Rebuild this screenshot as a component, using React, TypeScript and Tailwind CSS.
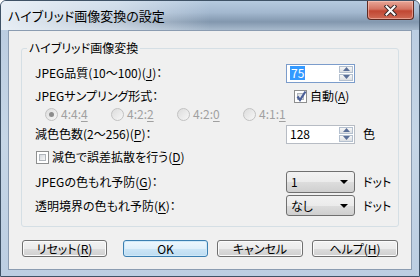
import type { ReactNode } from 'react';

const font = "font-['Noto_Sans_CJK_JP','Noto_Sans',sans-serif] [font-feature-settings:'palt']";

function Key({ children }: { children: ReactNode }) {
  return <span className="underline underline-offset-2">{children}</span>;
}

function CheckBox({ checked }: { checked?: boolean }) {
  return (
    <div className="relative w-[13px] h-[13px] shrink-0 border border-[#8e8f8f] bg-white p-[2px]">
      <div className="w-full h-full border border-[#b0b5bb] bg-[linear-gradient(135deg,#d7dbe0,#f7f7f7)]" />
      {checked && (
        <svg className="absolute left-[1px] top-[-1px]" width="11" height="12" viewBox="0 0 11 12">
          <path d="M1.5 6.5 L4 10 L9.5 1.5" fill="none" stroke="#4b5f98" strokeWidth="2.2" />
        </svg>
      )}
    </div>
  );
}

function Radio({ label, last, selected }: { label: string; last: string; selected?: boolean }) {
  return (
    <div className="flex items-center w-[66px] shrink-0">
      <div className="w-[13px] h-[13px] rounded-full border border-[#c2c2c2] bg-[linear-gradient(135deg,#dcdcdc,#f7f7f7)] flex items-center justify-center">
        {selected && <div className="w-[5px] h-[5px] rounded-full bg-[#8c8c8c]" />}
      </div>
      <span className="ml-[3px] text-[#a0a0a0] text-[12px]">
        {label}
        <Key>{last}</Key>
      </span>
    </div>
  );
}

function SpinBox({ value, focused }: { value: string; focused?: boolean }) {
  return (
    <div
      className={
        'flex w-[69px] h-[19px] shrink-0 border bg-white ' +
        (focused ? 'border-[#7b9ccb]' : 'border-[#b7bcc4]')
      }
    >
      <div className="flex-1 flex items-center pl-[3px]">
        {focused ? (
          <span className="bg-[#3399ff] text-white leading-[14px] px-[1px]">{value}</span>
        ) : (
          <span className="leading-[14px]">{value}</span>
        )}
      </div>
      <div className="flex flex-col w-[16px] p-[1px] gap-[1px]">
        <div className="flex-1 flex items-center justify-center border border-[#b4c0cf] bg-[linear-gradient(to_bottom,#f7f7f7,#dcdfe3)]">
          <svg width="7" height="4" viewBox="0 0 7 4">
            <path d="M0 4 L3.5 0 L7 4 Z" fill="#5a6f98" />
          </svg>
        </div>
        <div className="flex-1 flex items-center justify-center border border-[#b4c0cf] bg-[linear-gradient(to_bottom,#f7f7f7,#dcdfe3)]">
          <svg width="7" height="4" viewBox="0 0 7 4">
            <path d="M0 0 L3.5 4 L7 0 Z" fill="#5a6f98" />
          </svg>
        </div>
      </div>
    </div>
  );
}

function Combo({ value, tall }: { value: string; tall?: boolean }) {
  return (
    <div
      className={
        'flex items-center w-[69px] shrink-0 rounded-[3px] border border-[#707070] pl-[4px] pr-[6px] ' +
        'bg-[linear-gradient(to_bottom,#f2f2f2_0%,#ebebeb_50%,#dddddd_51%,#cfcfcf_100%)] ' +
        (tall ? 'h-[22px]' : 'h-[21px]')
      }
    >
      <span className="flex-1">{value}</span>
      <svg width="8" height="4" viewBox="0 0 8 4">
        <path d="M0 0 L8 0 L4 4 Z" fill="#000" />
      </svg>
    </div>
  );
}

function Button({ children, width, primary }: { children: ReactNode; width: string; primary?: boolean }) {
  return (
    <div
      className={
        'h-[17px] flex items-center justify-center rounded-[3px] border ' +
        width +
        ' ' +
        (primary
          ? 'border-[#3c7fb1] bg-[linear-gradient(to_bottom,#eef7fd_0%,#e0f0fb_50%,#cde6f7_51%,#bddcf1_100%)] shadow-[inset_0_0_0_1px_#cfe9f9]'
          : 'border-[#707070] bg-[linear-gradient(to_bottom,#f2f2f2_0%,#ebebeb_50%,#dddddd_51%,#cfcfcf_100%)] shadow-[inset_0_0_0_1px_#fbfbfb]')
      }
    >
      <span className="leading-[12px]">{children}</span>
    </div>
  );
}

export default function App() {
  return (
    <div
      className={
        font +
        ' w-[420px] h-[277px] flex flex-col rounded-t-[6px] border border-[#3f5266] text-[12px] text-black ' +
        'bg-[linear-gradient(to_bottom,#b9cbe0,#c6d6e6_50%,#bccee2)]'
      }
    >
      {/* Title bar */}
      <div className="h-[29px] flex shrink-0 rounded-t-[5px] bg-[linear-gradient(to_right,rgba(236,242,248,0.95)_0%,rgba(236,242,248,0.55)_28%,rgba(236,242,248,0)_50%),linear-gradient(to_bottom,#b6cadf_0%,#a3b8cf_40%,#8297ae_72%,#a7b9cc_100%)]">
        <div className="flex-1 flex items-center pl-[7px] text-[13px]">ハイブリッド画像変換の設定</div>
        <div className="mr-[5px] w-[47px] h-[19px] flex items-center justify-center rounded-b-[4px] border border-t-0 border-[#5e2a22] bg-[linear-gradient(to_bottom,#e8a798_0%,#d47462_45%,#c14733_55%,#cf6a55_100%)] shadow-[inset_0_0_0_1px_rgba(255,210,200,0.5)]">
          <svg width="13" height="11" viewBox="0 0 13 11">
            <path d="M2.5 1.5 L10.5 9.5 M10.5 1.5 L2.5 9.5" stroke="#3b2a2a" strokeWidth="4" strokeLinecap="square" />
            <path d="M2.5 1.5 L10.5 9.5 M10.5 1.5 L2.5 9.5" stroke="#ffffff" strokeWidth="2" strokeLinecap="square" />
          </svg>
        </div>
      </div>

      {/* Client area */}
      <div className="flex-1 mx-[7px] mb-[6px] border border-[#8b9cb1] bg-[#f0f0f0] pt-[11px] pl-[12px] pr-[12px] flex flex-col">
        <fieldset className="border border-[#d5dfe5] rounded-[3px] px-[5px] pt-[8px] pb-[13px]">
          <legend className="px-[2px] leading-[12px]">ハイブリッド画像変換</legend>
          <div className="pl-[8px] flex flex-col">
            <div className="h-[22px] flex items-center">
              <div className="w-[251px] shrink-0">
                JPEG品質(10～100)(<Key>J</Key>)：
              </div>
              <SpinBox value="75" focused />
            </div>
            <div className="h-[24px] flex items-center">
              <div className="w-[251px] shrink-0">JPEGサンプリング形式：</div>
              <div className="ml-[8px] flex items-center">
                <CheckBox checked />
                <span className="ml-[3px]">
                  自動(<Key>A</Key>)
                </span>
              </div>
            </div>
            <div className="h-[12px] flex items-center pl-[10px]">
              <Radio label="4:4:" last="4" selected />
              <Radio label="4:2:" last="2" />
              <Radio label="4:2:" last="0" />
              <Radio label="4:1:" last="1" />
            </div>
            <div className="h-[28px] flex items-center">
              <div className="w-[251px] shrink-0">
                減色色数(2～256)(<Key>P</Key>)：
              </div>
              <SpinBox value="128" />
              <span className="ml-[8px]">色</span>
            </div>
            <div className="h-[18px] flex items-center pl-[1px]">
              <CheckBox />
              <span className="ml-[3px]">
                減色で誤差拡散を行う(<Key>D</Key>)
              </span>
            </div>
            <div className="h-[32px] flex items-center">
              <div className="w-[251px] shrink-0">
                JPEGの色もれ予防(<Key>G</Key>)：
              </div>
              <Combo value="1" tall />
              <span className="ml-[8px]">ドット</span>
            </div>
            <div className="h-[15px] flex items-center">
              <div className="w-[251px] shrink-0">
                透明境界の色もれ予防(<Key>K</Key>)：
              </div>
              <Combo value="なし" />
              <span className="ml-[8px]">ドット</span>
            </div>
          </div>
        </fieldset>

        <div className="mt-[13px] ml-[1px] flex items-center">
          <Button width="w-[85px]">
            リセット(<Key>R</Key>)
          </Button>
          <div className="w-[16px]" />
          <Button width="w-[85px]" primary>
            OK
          </Button>
          <div className="w-[9px]" />
          <Button width="w-[86px]">キャンセル</Button>
          <div className="w-[9px]" />
          <Button width="w-[86px]">
            ヘルプ(<Key>H</Key>)
          </Button>
        </div>
      </div>
    </div>
  );
}
